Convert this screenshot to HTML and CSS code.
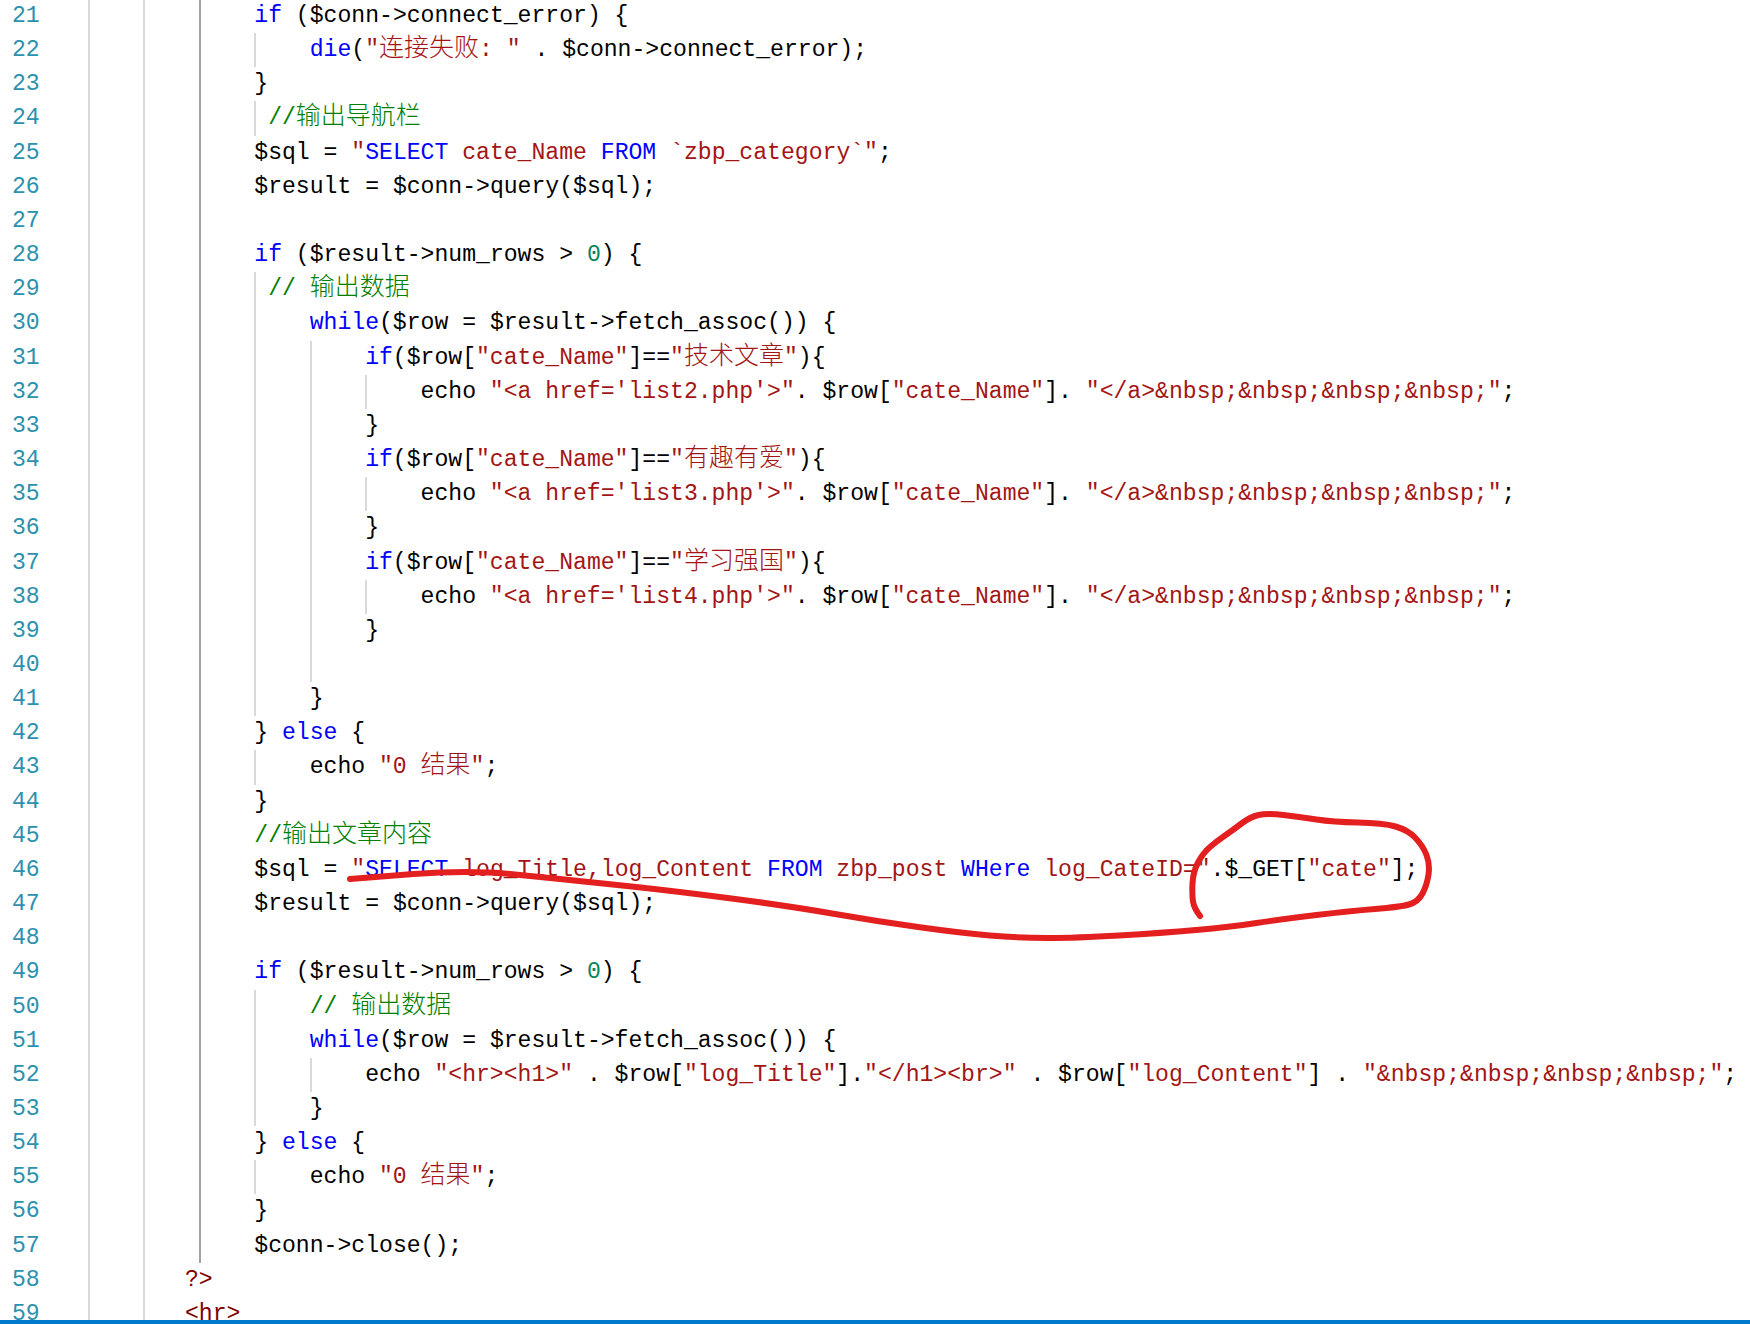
FILE: index.html
```html
<!DOCTYPE html>
<html lang="zh-CN">
<head>
  <meta charset="UTF-8" />
  <meta name="viewport" content="width=device-width, initial-scale=1.0" />
  <title>index.php</title>
  <link rel="stylesheet" href="styles.css">
</head>

<body>
  <main class="page">
    <section class="editor">
      <div class="line"><span class="ln">21</span><div class="src">        <span class="ig dk"></span><span class="kw">if</span> ($conn-&gt;connect_error) {</div></div>
      <div class="line"><span class="ln">22</span><div class="src">        <span class="ig dk"></span><span class="ig"></span><span class="kw">die</span>(<span class="str">"<span class="cn">连接失败</span>: "</span> . $conn-&gt;connect_error);</div></div>
      <div class="line"><span class="ln">23</span><div class="src">        <span class="ig dk"></span>}</div></div>
      <div class="line"><span class="ln">24</span><div class="src">        <span class="ig dk"></span><span class="ig one"></span><span class="com">//<span class="cn">输出导航栏</span></span></div></div>
      <div class="line"><span class="ln">25</span><div class="src">        <span class="ig dk"></span>$sql = <span class="str">"<span class="kw">SELECT</span> cate_Name <span class="kw">FROM</span> `zbp_category`"</span>;</div></div>
      <div class="line"><span class="ln">26</span><div class="src">        <span class="ig dk"></span>$result = $conn-&gt;query($sql);</div></div>
      <div class="line"><span class="ln">27</span><div class="src">        <span class="ig dk"></span></div></div>
      <div class="line"><span class="ln">28</span><div class="src">        <span class="ig dk"></span><span class="kw">if</span> ($result-&gt;num_rows &gt; <span class="lit">0</span>) {</div></div>
      <div class="line"><span class="ln">29</span><div class="src">        <span class="ig dk"></span><span class="ig one"></span><span class="com">// <span class="cn">输出数据</span></span></div></div>
      <div class="line"><span class="ln">30</span><div class="src">        <span class="ig dk"></span><span class="ig"></span><span class="kw">while</span>($row = $result-&gt;fetch_assoc()) {</div></div>
      <div class="line"><span class="ln">31</span><div class="src">        <span class="ig dk"></span><span class="ig"></span><span class="ig"></span><span class="kw">if</span>($row[<span class="str">"cate_Name"</span>]==<span class="str">"<span class="cn">技术文章</span>"</span>){</div></div>
      <div class="line"><span class="ln">32</span><div class="src">        <span class="ig dk"></span><span class="ig"></span><span class="ig"></span><span class="ig"></span>echo <span class="str">"&lt;a href='list2.php'&gt;"</span>. $row[<span class="str">"cate_Name"</span>]. <span class="str">"&lt;/a&gt;&amp;nbsp;&amp;nbsp;&amp;nbsp;&amp;nbsp;"</span>;</div></div>
      <div class="line"><span class="ln">33</span><div class="src">        <span class="ig dk"></span><span class="ig"></span><span class="ig"></span>}</div></div>
      <div class="line"><span class="ln">34</span><div class="src">        <span class="ig dk"></span><span class="ig"></span><span class="ig"></span><span class="kw">if</span>($row[<span class="str">"cate_Name"</span>]==<span class="str">"<span class="cn">有趣有爱</span>"</span>){</div></div>
      <div class="line"><span class="ln">35</span><div class="src">        <span class="ig dk"></span><span class="ig"></span><span class="ig"></span><span class="ig"></span>echo <span class="str">"&lt;a href='list3.php'&gt;"</span>. $row[<span class="str">"cate_Name"</span>]. <span class="str">"&lt;/a&gt;&amp;nbsp;&amp;nbsp;&amp;nbsp;&amp;nbsp;"</span>;</div></div>
      <div class="line"><span class="ln">36</span><div class="src">        <span class="ig dk"></span><span class="ig"></span><span class="ig"></span>}</div></div>
      <div class="line"><span class="ln">37</span><div class="src">        <span class="ig dk"></span><span class="ig"></span><span class="ig"></span><span class="kw">if</span>($row[<span class="str">"cate_Name"</span>]==<span class="str">"<span class="cn">学习强国</span>"</span>){</div></div>
      <div class="line"><span class="ln">38</span><div class="src">        <span class="ig dk"></span><span class="ig"></span><span class="ig"></span><span class="ig"></span>echo <span class="str">"&lt;a href='list4.php'&gt;"</span>. $row[<span class="str">"cate_Name"</span>]. <span class="str">"&lt;/a&gt;&amp;nbsp;&amp;nbsp;&amp;nbsp;&amp;nbsp;"</span>;</div></div>
      <div class="line"><span class="ln">39</span><div class="src">        <span class="ig dk"></span><span class="ig"></span><span class="ig"></span>}</div></div>
      <div class="line"><span class="ln">40</span><div class="src">        <span class="ig dk"></span><span class="ig"></span><span class="ig"></span></div></div>
      <div class="line"><span class="ln">41</span><div class="src">        <span class="ig dk"></span><span class="ig"></span>}</div></div>
      <div class="line"><span class="ln">42</span><div class="src">        <span class="ig dk"></span>} <span class="kw">else</span> {</div></div>
      <div class="line"><span class="ln">43</span><div class="src">        <span class="ig dk"></span><span class="ig"></span>echo <span class="str">"0 <span class="cn">结果</span>"</span>;</div></div>
      <div class="line"><span class="ln">44</span><div class="src">        <span class="ig dk"></span>}</div></div>
      <div class="line"><span class="ln">45</span><div class="src">        <span class="ig dk"></span><span class="com">//<span class="cn">输出文章内容</span></span></div></div>
      <div class="line"><span class="ln">46</span><div class="src">        <span class="ig dk"></span>$sql = <span class="str">"<span class="kw">SELECT</span> log_Title,log_Content <span class="kw">FROM</span> zbp_post <span class="kw">WHere</span> log_CateID="</span>.$_GET[<span class="str">"cate"</span>];</div></div>
      <div class="line"><span class="ln">47</span><div class="src">        <span class="ig dk"></span>$result = $conn-&gt;query($sql);</div></div>
      <div class="line"><span class="ln">48</span><div class="src">        <span class="ig dk"></span></div></div>
      <div class="line"><span class="ln">49</span><div class="src">        <span class="ig dk"></span><span class="kw">if</span> ($result-&gt;num_rows &gt; <span class="lit">0</span>) {</div></div>
      <div class="line"><span class="ln">50</span><div class="src">        <span class="ig dk"></span><span class="ig"></span><span class="com">// <span class="cn">输出数据</span></span></div></div>
      <div class="line"><span class="ln">51</span><div class="src">        <span class="ig dk"></span><span class="ig"></span><span class="kw">while</span>($row = $result-&gt;fetch_assoc()) {</div></div>
      <div class="line"><span class="ln">52</span><div class="src">        <span class="ig dk"></span><span class="ig"></span><span class="ig"></span>echo <span class="str">"&lt;hr&gt;&lt;h1&gt;"</span> . $row[<span class="str">"log_Title"</span>].<span class="str">"&lt;/h1&gt;&lt;br&gt;"</span> . $row[<span class="str">"log_Content"</span>] . <span class="str">"&amp;nbsp;&amp;nbsp;&amp;nbsp;&amp;nbsp;"</span>;</div></div>
      <div class="line"><span class="ln">53</span><div class="src">        <span class="ig dk"></span><span class="ig"></span>}</div></div>
      <div class="line"><span class="ln">54</span><div class="src">        <span class="ig dk"></span>} <span class="kw">else</span> {</div></div>
      <div class="line"><span class="ln">55</span><div class="src">        <span class="ig dk"></span><span class="ig"></span>echo <span class="str">"0 <span class="cn">结果</span>"</span>;</div></div>
      <div class="line"><span class="ln">56</span><div class="src">        <span class="ig dk"></span>}</div></div>
      <div class="line"><span class="ln">57</span><div class="src">        <span class="ig dk"></span>$conn-&gt;close();</div></div>
      <div class="line"><span class="ln">58</span><div class="src">       <span class="tag">?&gt;</span></div></div>
      <div class="line"><span class="ln">59</span><div class="src">       <span class="tag">&lt;hr&gt;</span></div></div>
    </section>

    <div class="status"></div>

    <!-- red pen mark drawn over the screenshot -->
    <svg class="ink" width="1750" height="1324" viewBox="0 0 1750 1324">
      <path d="M350 879 Q387 876 413.5 874 Q440 872 465 872 Q490 872 510 874 Q530 876 555 878.5 Q580 881 627 886 Q674 891 731.5 898.5 Q789 906 832 913.5 Q875 921 918 927 Q961 933 990 935.5 Q1019 938 1047.5 938 Q1076 938 1119 935.5 Q1162 933 1196 930 Q1230 927 1256.5 923 Q1283 919 1316.5 915 Q1350 911 1375 909 Q1400 907 1409 904.5 Q1418 902 1422.5 893.5 Q1427 885 1428.5 874.5 Q1430 864 1426.5 855 Q1423 846 1415.5 838 Q1408 830 1395.5 826.5 Q1383 823 1358 822.5 Q1333 822 1316.5 819.5 Q1300 817 1283.5 815 Q1267 813 1258.5 815 Q1250 817 1241.5 823.5 Q1233 830 1225 835.5 Q1217 841 1210 847 Q1203 853 1198 862.5 Q1193 872 1192.5 883.5 Q1192 895 1193 901.5 Q1194 908 1200 916" />
    </svg>
  </main>
</body>
</html>
```

FILE: styles.css
```css
* {
  box-sizing: border-box;
}

body {
  margin: 0;
  background: #fff;
  overflow: hidden;
}

.page {
  position: relative;
  height: 1324px;
  overflow: hidden;
}

.editor {
  height: 1320px;
  overflow: hidden;
  padding-top: 0;
  font-family: "Liberation Mono", "Noto Sans CJK SC", monospace;
  font-size: 23.1px;
  line-height: 34.17px;
  color: #000;
}

.line {
  display: flex;
  height: 34.17px;
}

.line:first-child {
  margin-top: -1px;
}

.ln {
  flex: none;
  width: 88px;
  padding-left: 12px;
  color: #2b91af;
}

/* the two outer guides run through every line */
.src {
  flex: 1;
  white-space: pre;
  background-image:
    linear-gradient(#d9d9d9, #d9d9d9),
    linear-gradient(#d9d9d9, #d9d9d9);
  background-size: 2px 100%;
  background-position: 0 0, 4ch 0;
  background-repeat: no-repeat;
}

.ig {
  display: inline-block;
  width: 4ch;
  height: 34.17px;
  vertical-align: top;
  border-left: 2px solid #d9d9d9;
}

.ig.one {
  width: 1ch;
}

.ig.dk {
  border-left-color: #a3a3a3;
}

.kw {
  color: #0000ff;
}

.str {
  color: #a31515;
}

.com {
  color: #008000;
}

.lit {
  color: #098658;
}

.tag {
  color: #800000;
}

.cn {
  font-family: "Noto Sans CJK SC", sans-serif;
  font-size: 25px;
  font-weight: 300;
  line-height: 1;
}

.status {
  height: 4px;
  background: #007acc;
}

.ink {
  position: absolute;
  top: 0;
  left: 0;
  pointer-events: none;
}

.ink path {
  fill: none;
  stroke: #e3201f;
  stroke-width: 6;
  stroke-linecap: round;
  stroke-linejoin: round;
}
```
